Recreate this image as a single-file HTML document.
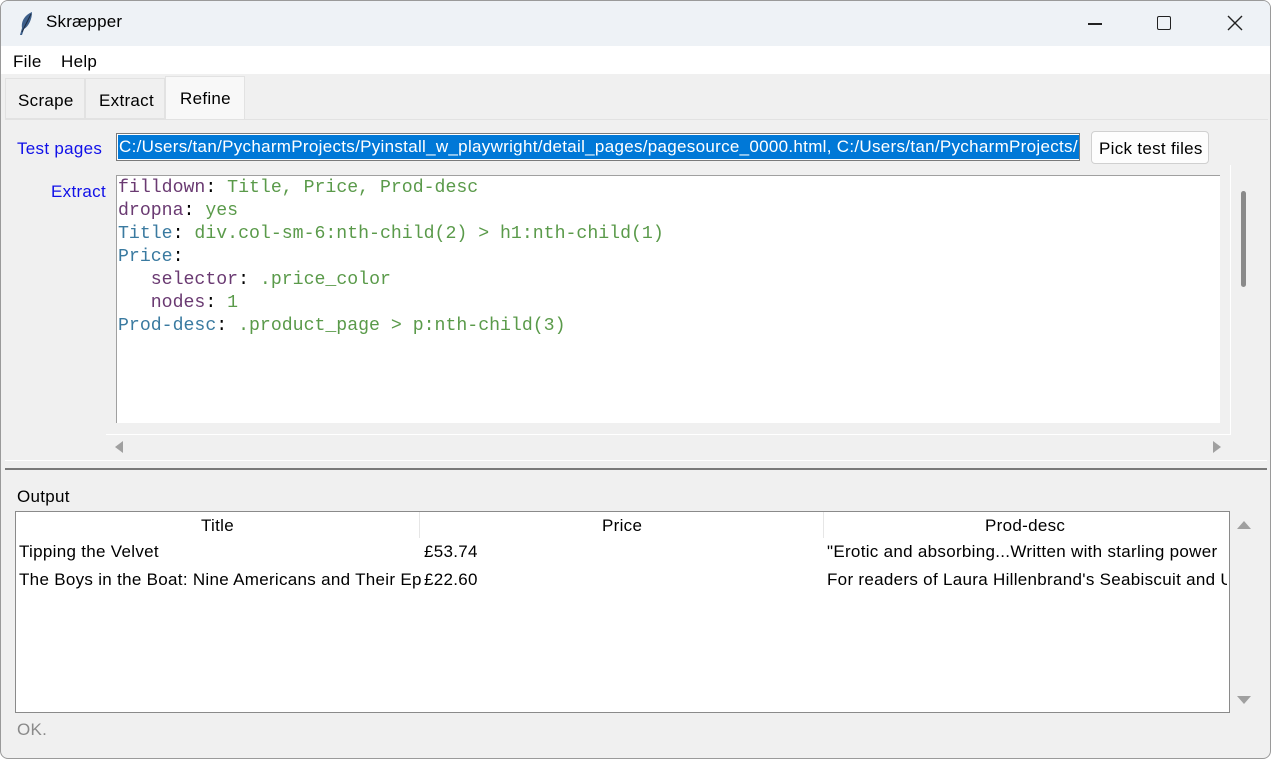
<!DOCTYPE html>
<html><head><meta charset="utf-8"><style>
*{margin:0;padding:0;box-sizing:border-box}
body{width:1271px;height:759px;overflow:hidden;background:#fff;font-family:"Liberation Sans",sans-serif;font-size:17px;letter-spacing:0.3px;color:#000;position:relative}
.a{position:absolute;white-space:nowrap}
.win{position:absolute;left:0;top:0;width:1271px;height:759px;border:1px solid #9a9a9a;border-radius:8px;overflow:hidden;background:#f0f0f0}
.code{font-family:"Liberation Mono",monospace;font-size:18.2px;line-height:23px;letter-spacing:0}
.p{color:#6a3a72}.t{color:#3a7aa0}.g{color:#5a9a4a}
</style></head><body>
<div class="win">
 <div class="a" style="left:0;top:0;width:1271px;height:45px;background:#eef2f6"></div>
 <svg class="a" style="left:16px;top:10px" width="18" height="26" viewBox="0 0 18 26"><path d="M15 1 C8 4 4 10 5 17 L3 24 L5 24 L7 18 C12 15 15 8 15 1Z" fill="#3d5f8a"/><path d="M14 3 L5 21" stroke="#1c2c40" stroke-width="1"/></svg>
 <div class="a" style="left:45px;top:11px;font-size:17px;letter-spacing:0.2px">Skræpper</div>
 <div class="a" style="left:1087px;top:22px;width:14px;height:1.5px;background:#222"></div>
 <div class="a" style="left:1156px;top:15px;width:14px;height:14px;border:1.5px solid #222;border-radius:2px"></div>
 <svg class="a" style="left:1226px;top:14px" width="16" height="16"><path d="M1 1L15 15M15 1L1 15" stroke="#222" stroke-width="1.4"/></svg>
 <div class="a" style="left:0;top:45px;width:1271px;height:28px;background:#fff"></div>
 <div class="a" style="left:12px;top:51px">File</div>
 <div class="a" style="left:60px;top:51px">Help</div>
 <div class="a" style="left:4px;top:77px;width:80px;height:41px;border:1px solid #e2e2e2;background:#f0f0f0"></div>
 <div class="a" style="left:17px;top:90px">Scrape</div>
 <div class="a" style="left:84px;top:77px;width:80px;height:41px;border:1px solid #e2e2e2;background:#f0f0f0"></div>
 <div class="a" style="left:98px;top:90px">Extract</div>
 <div class="a" style="left:164px;top:75px;width:80px;height:43px;border:1px solid #e2e2e2;border-bottom:none;background:#f8f8f8"></div>
 <div class="a" style="left:179px;top:88px">Refine</div>
 <div class="a" style="left:4px;top:118px;width:1263px;height:1px;background:#e2e2e2"></div>
 <div class="a" style="left:16px;top:138px;color:#1010e8">Test pages</div>
 <div class="a" style="left:115px;top:132px;width:964px;height:28px;border:1px solid #7a7a7a;background:#fff;overflow:hidden">
  <div class="a" style="left:1px;top:1px;width:962px;height:24px;background:#0078d7;color:#fff;padding-left:1px;line-height:24px;overflow:hidden">C:/Users/tan/PycharmProjects/Pyinstall_w_playwright/detail_pages/pagesource_0000.html, C:/Users/tan/PycharmProjects/Pyinstall_w_playwright/detail_pages/</div>
 </div>
 <div class="a" style="left:1090px;top:130px;width:118px;height:33px;border:1px solid #d0d0d0;border-radius:4px;background:#fdfdfd"></div>
 <div class="a" style="left:1098px;top:138px">Pick test files</div>
 <div class="a" style="left:50px;top:181px;color:#1010e8">Extract</div>
 <div class="a" style="left:115px;top:174px;width:1104px;height:248px;background:#fff;border-top:1px solid #a0a0a0;border-left:1px solid #a0a0a0"></div>
 <div class="a" style="left:1229px;top:164px;width:1px;height:270px;background:#fff"></div>
 <div class="a" style="left:1240px;top:190px;width:5px;height:96px;background:#8a8a8a;border-radius:3px"></div>
 <div class="a code" style="left:117px;top:176px">
<span class="p">filldown</span>: <span class="g">Title, Price, Prod-desc</span><br>
<span class="p">dropna</span>: <span class="g">yes</span><br>
<span class="t">Title</span>: <span class="g">div.col-sm-6:nth-child(2) &gt; h1:nth-child(1)</span><br>
<span class="t">Price</span>:<br>
&nbsp;&nbsp;&nbsp;<span class="p">selector</span>: <span class="g">.price_color</span><br>
&nbsp;&nbsp;&nbsp;<span class="p">nodes</span>: <span class="g">1</span><br>
<span class="t">Prod-desc</span>: <span class="g">.product_page &gt; p:nth-child(3)</span>
 </div>
 <div class="a" style="left:105px;top:433px;width:1124px;height:1px;background:#fff"></div>
 <svg class="a" style="left:113px;top:440px" width="10" height="12"><path d="M9 0V12L1 6Z" fill="#a0a0a0"/></svg>
 <svg class="a" style="left:1211px;top:440px" width="10" height="12"><path d="M1 0V12L9 6Z" fill="#a0a0a0"/></svg>
 <div class="a" style="left:4px;top:459px;width:1262px;height:1px;background:#fff"></div>
 <div class="a" style="left:4px;top:467px;width:1262px;height:2px;background:#7a7a7a"></div>
 <div class="a" style="left:16px;top:486px">Output</div>
 <div class="a" style="left:14px;top:510px;width:1215px;height:202px;border:1px solid #8a8a8a;background:#fff;overflow:hidden">
  <div class="a" style="left:403px;top:0;width:1px;height:26px;background:#e6e6e6"></div>
  <div class="a" style="left:807px;top:0;width:1px;height:26px;background:#e6e6e6"></div>
  <div class="a" style="left:185px;top:4px">Title</div>
  <div class="a" style="left:586px;top:4px">Price</div>
  <div class="a" style="left:969px;top:4px">Prod-desc</div>
  <div class="a" style="left:3px;top:30px;width:400px;overflow:hidden">Tipping the Velvet</div>
  <div class="a" style="left:408px;top:30px">£53.74</div>
  <div class="a" style="left:811px;top:30px;width:400px;overflow:hidden">"Erotic and absorbing...Written with starling power</div>
  <div class="a" style="left:3px;top:58px;width:402px;overflow:hidden">The Boys in the Boat: Nine Americans and Their Ep</div>
  <div class="a" style="left:408px;top:58px">£22.60</div>
  <div class="a" style="left:811px;top:58px;width:400px;overflow:hidden">For readers of Laura Hillenbrand's Seabiscuit and U</div>
 </div>
 <svg class="a" style="left:1236px;top:519px" width="14" height="10"><path d="M0 9H14L7 1Z" fill="#a0a0a0"/></svg>
 <svg class="a" style="left:1236px;top:694px" width="14" height="10"><path d="M0 1H14L7 9Z" fill="#a0a0a0"/></svg>
 <div class="a" style="left:16px;top:719px;color:#8a8a8a">OK.</div>
</div>
</body></html>
